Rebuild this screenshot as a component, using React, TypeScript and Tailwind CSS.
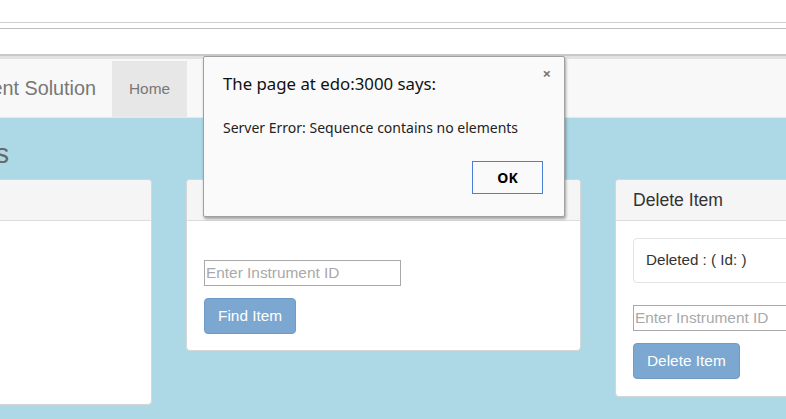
import React from 'react'

function Card({ title, children, w = 'w-[395px]', cls = '' }: { title: string; children?: React.ReactNode; w?: string; cls?: string }) {
  return (
    <div className={`${w} shrink-0 bg-white border border-[#d6d6d6] rounded-[4px] overflow-hidden ${cls}`}>
      <div className="h-[41px] bg-[#f5f5f5] border-b border-[#dddddd] px-[17px] flex items-center text-[17.6px] text-[#333]">{title}</div>
      {children}
    </div>
  )
}

function IdInput() {
  return (
    <input
      placeholder="Enter Instrument ID"
      className="block w-[197px] h-[26px] border border-[#a9a9a9] px-[1px] text-[15.4px] outline-none placeholder:text-[#a9a9a9]"
    />
  )
}

function BlueBtn({ label }: { label: string }) {
  return (
    <button className="h-[36px] px-[13px] rounded-[4px] bg-[#7ba7d0] border border-[#6f9bc6] text-white text-[15.4px]">{label}</button>
  )
}

export default function App() {
  return (
    <div className="relative w-[786px] h-[419px] overflow-hidden bg-[#add8e6] font-['Liberation_Sans',Arial,sans-serif]">
      {/* browser chrome strips */}
      <div className="bg-white">
        <div className="h-[22px]" />
        <div className="h-px bg-[#cfcfcf]" />
        <div className="h-[5px]" />
        <div className="h-px bg-[#bdbdbd]" />
        <div className="h-[25px]" />
        <div className="h-[2px] bg-[#c9c9c9]" />
        <div className="h-[3px] bg-[#e2e2e2]" />
      </div>

      {/* navbar */}
      <nav className="h-[59px] bg-[#f8f8f8] border-b border-[#e7e7e7] flex items-stretch">
        <div className="w-[96px] overflow-hidden flex justify-end items-center whitespace-nowrap text-[19.8px] text-[#777] pt-[1px]">
          Instrument Management Solution
        </div>
        <div className="w-[16px]" />
        <div className="w-[75px] bg-[#e7e7e7] flex items-center justify-center text-[15.4px] text-[#777] mt-[2px]">Home</div>
      </nav>

      {/* heading */}
      <div className="h-[61px] flex items-center">
        <div className="w-[9px] overflow-hidden flex justify-end whitespace-nowrap text-[27px] text-[#666] mt-[12px]">Instruments</div>
      </div>

      {/* cards */}
      <div className="flex items-start gap-[34px] -ml-[243px]">
        <Card title="Instruments">
          <div className="h-[183px]" />
        </Card>
        <Card title="Find Item">
          <div className="px-[17px] pt-[39px] pb-[16px]">
            <IdInput />
            <div className="mt-[12px]">
              <BlueBtn label="Find Item" />
            </div>
          </div>
        </Card>
        <Card title="Delete Item">
          <div className="px-[17px] pt-[17px] pb-[17px]">
            <div className="h-[45px] border border-[#e3e3e3] rounded-[4px] flex items-center px-[12px] text-[15.2px] text-[#333] mb-[22px]">
              Deleted : ( Id: )
            </div>
            <IdInput />
            <div className="mt-[12px]">
              <BlueBtn label="Delete Item" />
            </div>
          </div>
        </Card>
      </div>

      {/* alert dialog */}
      <div className="absolute left-[203px] top-[56px] w-[362px] h-[161px] bg-[#fafafa] border border-[#a0a0a0] rounded-[2px] shadow-[1px_2px_3px_rgba(0,0,0,0.35)] font-['Noto_Sans','Open_Sans',sans-serif]">
        <div className="absolute right-[13px] top-[9px] text-[15px] font-bold text-[#777] leading-none">×</div>
        <div className="pl-[19px] pt-[16px] text-[16.8px] text-[#111] leading-[22px]">The page at edo:3000 says:</div>
        <div className="pl-[19px] pt-[23px] text-[14px] text-[#222] leading-[20px]">Server Error: Sequence contains no elements</div>
        <div className="flex justify-end pr-[21px] pt-[23px]">
          <button className="w-[71px] h-[33px] border border-[#4a7fd6] bg-[#fafafa] text-[14px] font-bold text-black">OK</button>
        </div>
      </div>
    </div>
  )
}
